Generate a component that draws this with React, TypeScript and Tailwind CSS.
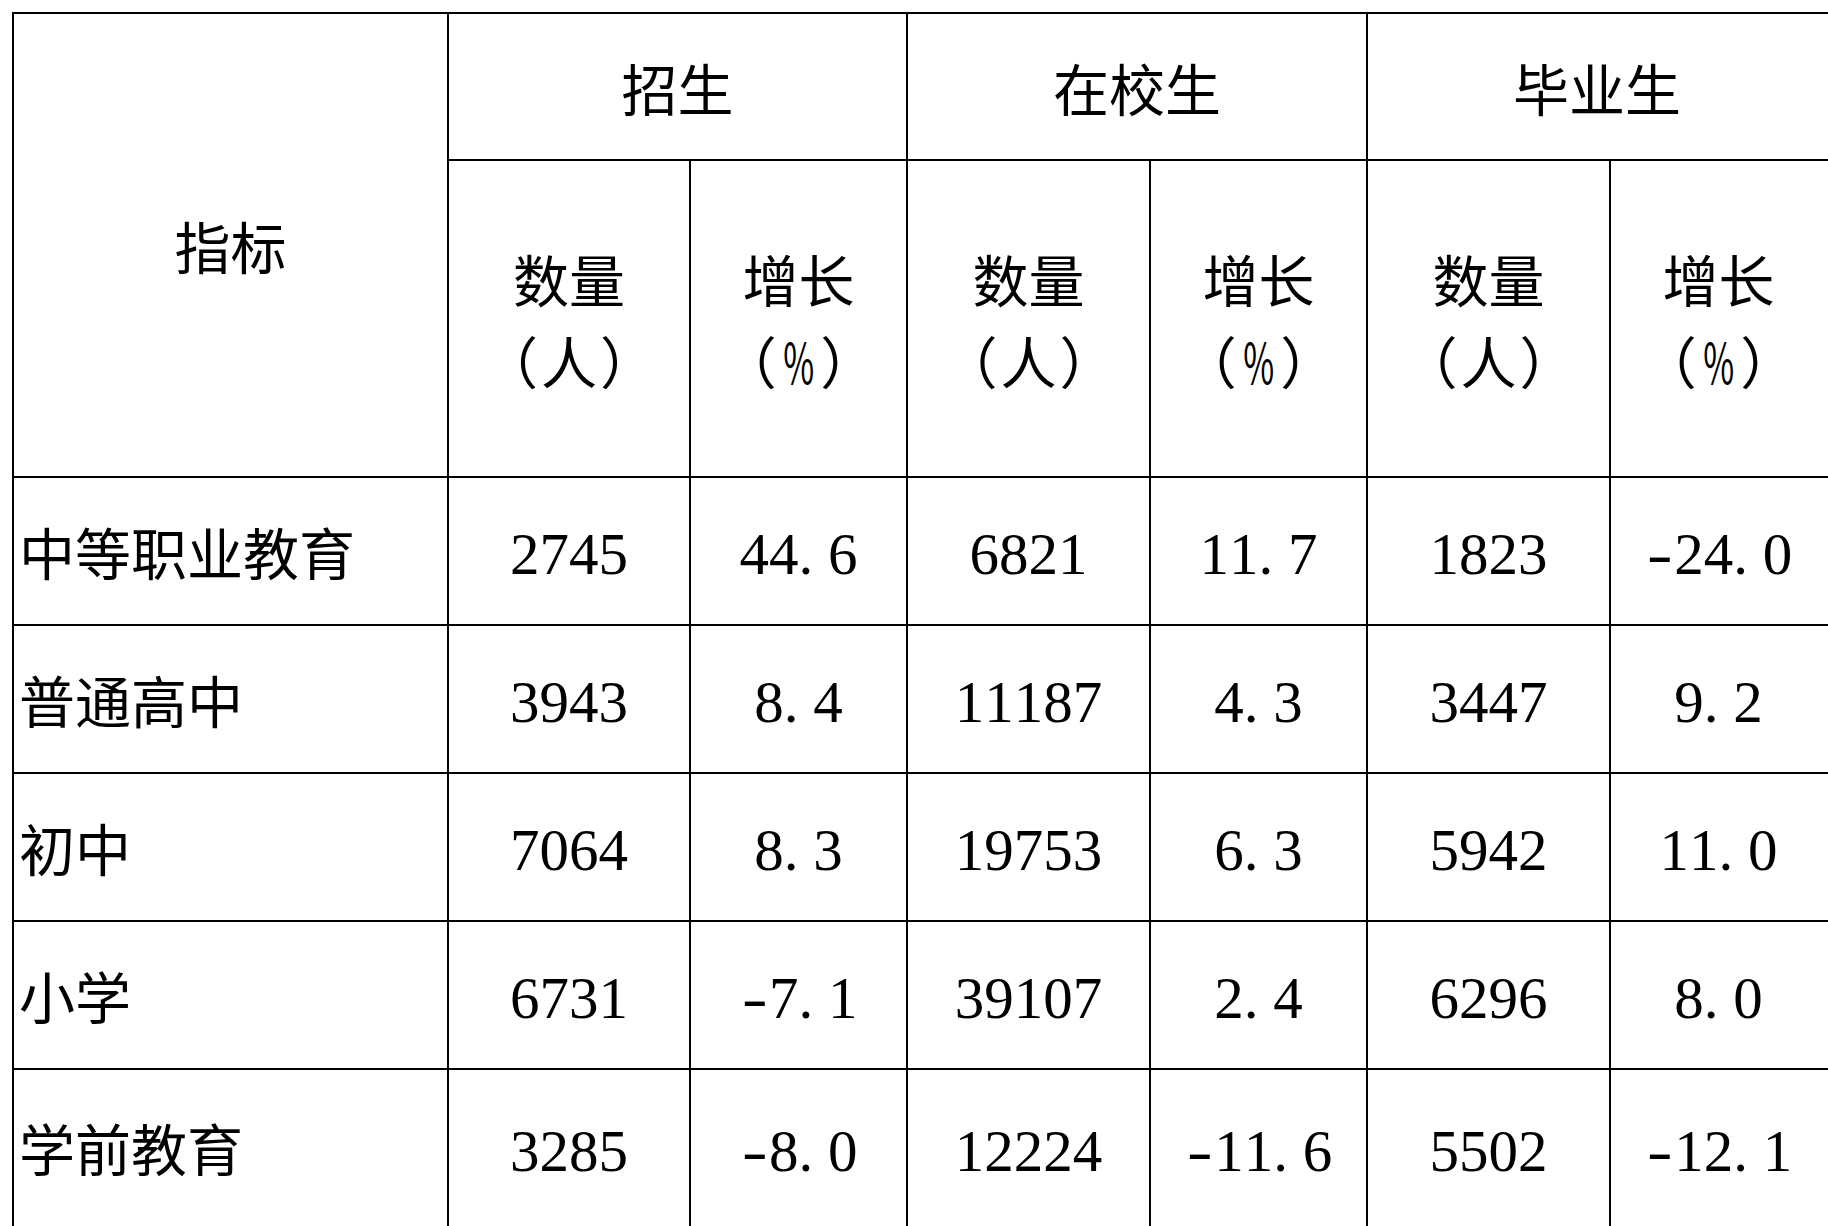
import React from 'react';

const GROUPS = ['招生', '在校生', '毕业生'];

const ROWS: string[][] = [
  ['中等职业教育', '2745', '44.6', '6821', '11.7', '1823', '-24.0'],
  ['普通高中', '3943', '8.4', '11187', '4.3', '3447', '9.2'],
  ['初中', '7064', '8.3', '19753', '6.3', '5942', '11.0'],
  ['小学', '6731', '-7.1', '39107', '2.4', '6296', '8.0'],
  ['学前教育', '3285', '-8.0', '12224', '-11.6', '5502', '-12.1'],
];

const sans = 'font-["Noto_Sans_CJK_SC","Noto_Sans",sans-serif]';
const cell = 'border-r-2 border-b-2 border-black';

// SimSun-style: every ascii char takes half an em
function Num({ v }: { v: string }) {
  return (
    <>
      {v.split('').map((c, i) =>
        c === '.' ? (
          <span key={i} className="inline-block w-[0.5em] text-left">.</span>
        ) : c === '-' ? (
          <span key={i} className="inline-block w-[0.5em] scale-x-[1.3] text-center">-</span>
        ) : (
          <span key={i}>{c}</span>
        )
      )}
    </>
  );
}

function SubHead({ kind, last }: { kind: 'n' | 'p'; last?: boolean }) {
  return (
    <div className={`${cell} flex items-center justify-center ${sans} text-[56px] leading-[82px] text-black text-center ${last ? 'pr-[23px]' : ''}`}>
      {kind === 'n' ? (
        <div>
          <div>数量</div>
          <div>（<span className="mx-[3px]">人</span>）</div>
        </div>
      ) : (
        <div>
          <div>增长</div>
          <div>（<span className="inline-block scale-x-[0.6] -mx-[4px]">%</span>）</div>
        </div>
      )}
    </div>
  );
}

export default function App() {
  return (
    <div className="h-[1226px] w-[1828px] overflow-hidden bg-white">
      <div className="ml-[12px] mt-[12px] grid w-max grid-cols-[435px_242px_217px_243px_217px_243px_240px] grid-rows-[147px_317px_148px_148px_148px_148px_200px] border-t-2 border-l-2 border-black">
        <div className={`${cell} row-span-2 flex items-center justify-center ${sans} text-[56px] text-black`}>
          指标
        </div>
        {GROUPS.map((g, gi) => (
          <div
            key={g}
            className={`${cell} col-span-2 flex items-center justify-center ${sans} text-[56px] text-black ${gi === GROUPS.length - 1 ? 'pr-[23px]' : ''}`}
          >
            {g}
          </div>
        ))}
        {GROUPS.map((g, gi) => (
          <React.Fragment key={g}>
            <SubHead kind="n" />
            <SubHead kind="p" last={gi === GROUPS.length - 1} />
          </React.Fragment>
        ))}
        {ROWS.map((r, ri) => (
          <React.Fragment key={r[0]}>
            <div
              className={`${cell} flex items-center pl-[5px] font-["Liberation_Serif","Noto_Sans_CJK_SC",serif] text-[56px] text-black whitespace-nowrap ${ri === ROWS.length - 1 ? 'pb-[34px]' : 'pt-[10px]'}`}
            >
              {r[0]}
            </div>
            {r.slice(1).map((v, i) => (
              <div
                key={i}
                className={`${cell} flex items-center justify-center font-["Liberation_Serif",serif] text-[59px] text-black whitespace-nowrap ${ri === ROWS.length - 1 ? 'pb-[36px]' : 'pt-[6px]'} ${i === 5 ? 'pr-[23px]' : ''}`}
              >
                <Num v={v} />
              </div>
            ))}
          </React.Fragment>
        ))}
      </div>
    </div>
  );
}
